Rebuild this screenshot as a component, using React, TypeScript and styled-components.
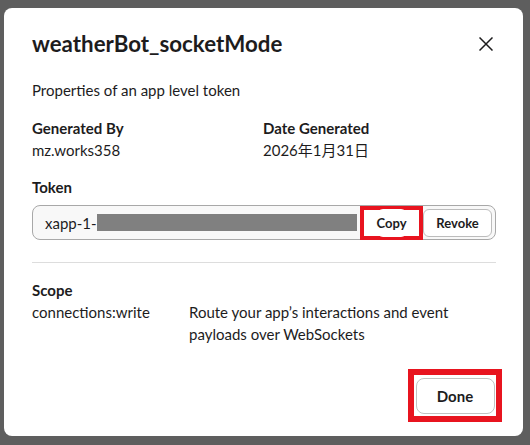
import React from "react";
import styled, { createGlobalStyle } from "styled-components";

const Global = createGlobalStyle`
  html, body { margin: 0; padding: 0; }
  body {
    background: #5e5e5e;
    font-family: Lato, "Noto Sans CJK JP", sans-serif;
    color: #1d1c1d;
    width: 530px;
    height: 445px;
    overflow: hidden;
  }
`;

const Modal = styled.div`
  box-sizing: border-box;
  margin: 8px 0 0 4px;
  width: 519px;
  height: 428px;
  background: #fff;
  border-radius: 8px;
  padding: 21px 27px 0 28px;
  display: flex;
  flex-direction: column;
`;

const Header = styled.div`
  display: flex;
  align-items: center;
  justify-content: space-between;
  height: 30px;
`;

const Title = styled.h1`
  margin: 0;
  font-size: 22.3px;
  line-height: 30px;
  font-weight: 700;
`;

const CloseButton = styled.button`
  border: 0;
  background: none;
  padding: 0;
  width: 14px;
  height: 14px;
  margin-right: 3px;
  display: flex;
  color: #1d1c1d;
`;

const Text = styled.div<{ $top?: number; $bold?: boolean }>`
  font-size: 15px;
  line-height: 22px;
  font-weight: ${(p) => (p.$bold ? 700 : 400)};
  margin-top: ${(p) => p.$top ?? 0}px;
`;

const InfoGrid = styled.div<{ $first: number; $top: number }>`
  display: grid;
  grid-template-columns: ${(p) => p.$first}px 1fr;
  margin-top: ${(p) => p.$top}px;
`;

const TokenField = styled.div`
  box-sizing: border-box;
  margin-top: 7px;
  height: 35px;
  border: 1px solid #a8a8a8;
  border-radius: 8px;
  background: #f8f8f8;
  display: flex;
  align-items: center;
  padding: 0 3px 0 12px;
`;

const TokenText = styled.span`
  font-size: 15px;
  line-height: 22px;
  color: #1d1c1d;
  white-space: nowrap;
  flex-shrink: 0;
`;

const Redaction = styled.span`
  flex: 1;
  height: 17px;
  background: #808080;
  margin-right: 3px;
`;

const Highlight = styled.div<{ $w: number; $h: number; $t: number }>`
  box-sizing: border-box;
  flex-shrink: 0;
  width: ${(p) => p.$w}px;
  height: ${(p) => p.$h}px;
  border: ${(p) => p.$t}px solid #e8141f;
  display: flex;
  align-items: center;
  justify-content: center;
  background: #fff;
`;

const SmallButton = styled.button<{ $plain?: boolean }>`
  box-sizing: border-box;
  flex-shrink: 0;
  height: 28px;
  width: ${(p) => (p.$plain ? "auto" : "69px")};
  padding: 0;
  border: ${(p) => (p.$plain ? "0" : "1px solid #bcbcbc")};
  border-radius: 6px;
  background: #fff;
  font-family: Lato, sans-serif;
  font-size: 13px;
  font-weight: 700;
  color: #1d1c1d;
`;

const Divider = styled.hr`
  border: 0;
  border-top: 1px solid #dddddd;
  margin: 22px 0 0;
`;

const Footer = styled.div`
  display: flex;
  justify-content: flex-end;
  margin-top: 24px;
  margin-right: -6px;
`;

const DoneButton = styled.button`
  box-sizing: border-box;
  width: 79px;
  height: 36px;
  border: 1px solid #c2c2c2;
  border-radius: 8px;
  background: #fff;
  font-family: Lato, sans-serif;
  font-size: 15px;
  font-weight: 700;
  color: #1d1c1d;
`;

export default function App() {
  return (
    <>
      <Global />
      <Modal>
        <Header>
          <Title>weatherBot_socketMode</Title>
          <CloseButton aria-label="Close">
            <svg width="14" height="14" viewBox="0 0 14 14">
              <path d="M0.5 0.5 L13.5 13.5 M13.5 0.5 L0.5 13.5" stroke="#1d1c1d" strokeWidth="1.5" fill="none" />
            </svg>
          </CloseButton>
        </Header>
        <Text $top={20}>Properties of an app level token</Text>
        <InfoGrid $first={231} $top={16}>
          <Text $bold>Generated By</Text>
          <Text $bold>Date Generated</Text>
          <Text>mz.works358</Text>
          <Text>2026年1月31日</Text>
        </InfoGrid>
        <Text $bold $top={15}>Token</Text>
        <TokenField>
          <TokenText>xapp-1-</TokenText>
          <Redaction />
          <Highlight $w={63} $h={34} $t={4}>
            <SmallButton $plain>Copy</SmallButton>
          </Highlight>
          <SmallButton>Revoke</SmallButton>
        </TokenField>
        <Divider />
        <Text $bold $top={16}>Scope</Text>
        <InfoGrid $first={157} $top={0}>
          <Text>connections:write</Text>
          <Text>
            Route your app’s interactions and event
            <br />
            payloads over WebSockets
          </Text>
        </InfoGrid>
        <Footer>
          <Highlight $w={94} $h={53} $t={6}>
            <DoneButton>Done</DoneButton>
          </Highlight>
        </Footer>
      </Modal>
    </>
  );
}
